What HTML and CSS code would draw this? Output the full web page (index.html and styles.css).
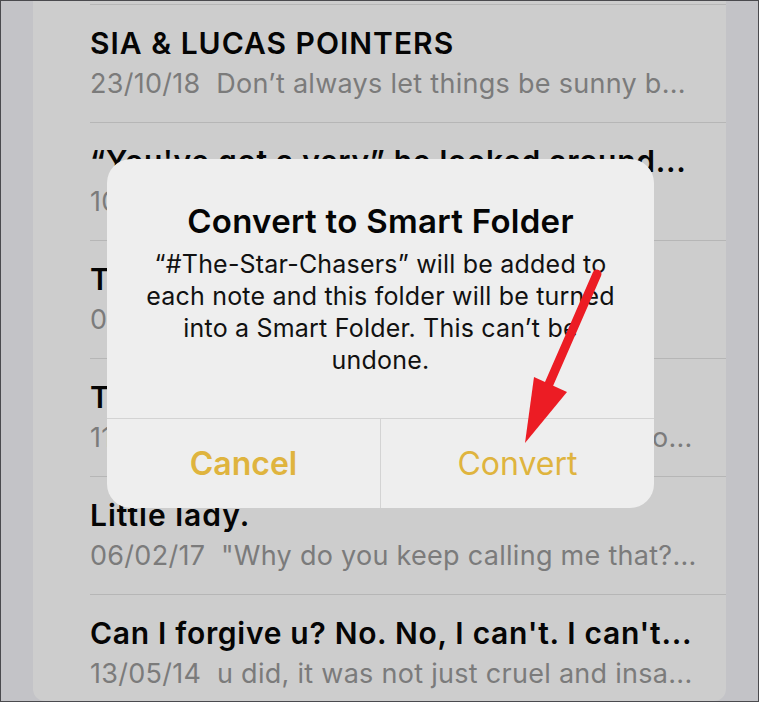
FILE: index.html
```html
<!DOCTYPE html>
<html>
<head>
<meta charset="utf-8">
<link rel="stylesheet" href="styles.css">
</head>
<body>
<div class="frame">
  <div class="strip"></div>
  <div class="panel">
    <div class="row">
      <div class="title">SIA &amp; LUCAS POINTERS</div>
      <div class="sub">23/10/18&nbsp;&nbsp;Don’t always let things be sunny b...</div>
    </div>
    <div class="row">
      <div class="title tight">“You've got a very” he looked around...</div>
      <div class="sub">10/09/18&nbsp;&nbsp;The rain fell softly over the city...</div>
    </div>
    <div class="row">
      <div class="title">The day</div>
      <div class="sub">07/06/18&nbsp;&nbsp;She said</div>
    </div>
    <div class="row">
      <div class="title">The end</div>
      <div class="sub">11/03/17&nbsp;&nbsp;I never thought it would come to yo...</div>
    </div>
    <div class="row">
      <div class="title">Little lady.</div>
      <div class="sub">06/02/17&nbsp;&nbsp;"Why do you keep calling me that?...</div>
    </div>
    <div class="row">
      <div class="title tight">Can I forgive u? No. No, I can't. I can't...</div>
      <div class="sub">13/05/14&nbsp;&nbsp;u did, it was not just cruel and insa...</div>
    </div>
  </div>
  <div class="strip"></div>

  <div class="alert">
    <div class="alert-body">
      <div class="alert-title">Convert to Smart Folder</div>
      <div class="alert-msg">“#The-Star-Chasers” will be added to<br>each note and this folder will be turned<br>into a Smart Folder. This can’t be<br>undone.</div>
    </div>
    <div class="alert-actions">
      <div class="btn cancel">Cancel</div>
      <div class="btn convert">Convert</div>
    </div>
  </div>

  <svg class="arrow" width="759" height="702" viewBox="0 0 759 702">
    <line x1="597" y1="274" x2="549" y2="384" stroke="#ec1c24" stroke-width="9" stroke-linecap="round"/>
    <polygon points="534,377 567,392 525,443" fill="#ec1c24"/>
  </svg>
</div>
</body>
</html>
```

FILE: styles.css
```css
* { box-sizing: border-box; }
html, body { margin: 0; padding: 0; }
body {
  font-family: Inter, "Liberation Sans", sans-serif;
  background: #4a4a4e;
}
.frame {
  position: relative;
  width: 759px;
  height: 702px;
  border: 1px solid #4a4a4e;
  display: flex;
  overflow: hidden;
  background: #c3c3c7;
}
.strip {
  width: 32px;
  flex: none;
  background: #c3c3c7;
}
.panel {
  flex: 1;
  background: #cdcdcd;
  padding: 3px 0 0 57px;
  border-radius: 0 0 12px 12px;
  overflow: hidden;
}
.row {
  border-top: 1px solid #b6b6b6;
  padding: 21px 0 21px 0;
  height: 118px;
}
.title {
  font-size: 30px;
  font-weight: 600;
  letter-spacing: 1px;
  line-height: 34px;
  color: #050505;
  white-space: nowrap;
}
.title.tight {
  letter-spacing: 0.7px;
}
.sub {
  margin-top: 8px;
  font-size: 27px;
  letter-spacing: 0.28px;
  line-height: 32px;
  color: #7b7b7b;
  white-space: nowrap;
}
.alert {
  position: absolute;
  left: 106px;
  top: 158px;
  width: 547px;
  height: 349px;
  background: #eeeeee;
  border-radius: 24px;
  display: flex;
  flex-direction: column;
  overflow: hidden;
}
.alert-body {
  height: 260px;
  padding: 42px 10px 0 10px;
  text-align: center;
  border-bottom: 1px solid #d3d3d3;
}
.alert-title {
  font-size: 33px;
  font-weight: 600;
  letter-spacing: 0.3px;
  line-height: 40px;
  color: #050505;
  white-space: nowrap;
}
.alert-msg {
  margin-top: 7px;
  font-size: 25px;
  letter-spacing: 0.2px;
  line-height: 32px;
  color: #111;
  white-space: nowrap;
}
.alert-actions {
  flex: 1;
  display: flex;
}
.btn {
  flex: 1;
  text-align: center;
  padding-top: 25px;
  font-size: 32px;
  line-height: 40px;
  color: #dfb43e;
}
.cancel {
  font-weight: 600;
  border-right: 1px solid #d3d3d3;
}
.convert {
  font-weight: 400;
}
.arrow {
  position: absolute;
  left: -1px;
  top: -1px;
  pointer-events: none;
}
```
